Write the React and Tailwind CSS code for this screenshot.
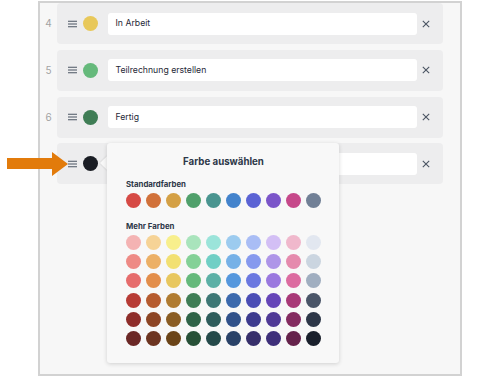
const rows = [
  { n: 4, color: "#e8c85a", label: "In Arbeit" },
  { n: 5, color: "#65b97b", label: "Teilrechnung erstellen" },
  { n: 6, color: "#3f7d55", label: "Fertig" },
  { n: 7, color: "#1a1d24", label: "", open: true },
];

const standard = ["#d64a45", "#d1713a", "#d4a045", "#50a06b", "#4a9590", "#4383cc", "#5b63d4", "#7b55c9", "#c6488a", "#718096"];

const more = [
  ["#f4b3b3", "#f6d396", "#f8ef8c", "#a9e4bc", "#9be4da", "#9ccbef", "#a9bdf5", "#d3bff5", "#f0b8cc", "#e2e7f0"],
  ["#ee8a85", "#ecb066", "#f2e072", "#84d197", "#70cfc5", "#76b1e7", "#8699ee", "#ae95e8", "#e58aad", "#cbd5e0"],
  ["#e66c6c", "#e38e4b", "#e8c75e", "#65b97b", "#5cb0a6", "#5597dd", "#6b78e0", "#9a78df", "#dc6ba0", "#a0aec0"],
  ["#b73b35", "#b65b2e", "#b07b30", "#3f7d55", "#3d7775", "#3b69ad", "#4a4db5", "#6545b8", "#a83877", "#4a5568"],
  ["#8e2d2a", "#8d4524", "#8a5c22", "#2f6347", "#2e5c5b", "#30518a", "#3c3a8e", "#4f3996", "#842b60", "#2d3748"],
  ["#6b2826", "#6d3521", "#6b4418", "#275037", "#254a4a", "#2a4268", "#372f6b", "#3e2f7a", "#65224b", "#1a202c"],
];

function Grip() {
  return (
    <svg width="9" height="8" viewBox="0 0 9 8" className="shrink-0">
      <path d="M0 1.3H9M0 4H9M0 6.7H9" stroke="#4b5563" strokeWidth="1.1" />
    </svg>
  );
}

function Close() {
  return (
    <svg width="8" height="8" viewBox="0 0 8 8" className="shrink-0">
      <path d="M0.8 0.8L7.2 7.2M7.2 0.8L0.8 7.2" stroke="#4b5563" strokeWidth="1.1" />
    </svg>
  );
}

function Swatch({ c }) {
  return <div className="w-[15px] h-[15px] rounded-full" style={{ background: c }} />;
}

function Picker() {
  return (
    <div className="absolute left-[50px] top-0 w-[232px] h-[220px] z-10">
      <div className="absolute left-[-5px] top-[15px] w-[10px] h-[10px] rotate-45 bg-[#f8f8f8] shadow-[0_0_2px_rgba(0,0,0,0.18)]" />
      <div className="relative h-full rounded-[3px] bg-[#f8f8f8] shadow-[0_1px_4px_rgba(0,0,0,0.16)] pt-[13px] pl-[19px] pr-[18px]">
        <div className="absolute left-0 top-[13px] w-[8px] h-[16px] bg-[#f8f8f8]" />
        <div className="relative text-center text-[9.7px] leading-[12px] font-bold text-[#2d3748]">Farbe auswählen</div>
        <div className="mt-[11px] text-[7.8px] leading-[11px] font-bold text-[#2d3748]">Standardfarben</div>
        <div className="mt-[3px] grid grid-cols-10 gap-x-[5px] w-[195px]">
          {standard.map((c) => (
            <Swatch key={c} c={c} />
          ))}
        </div>
        <div className="mt-[13px] text-[7.8px] leading-[11px] font-bold text-[#2d3748]">Mehr Farben</div>
        <div className="mt-[2.5px] grid grid-cols-10 gap-x-[5px] gap-y-[4.3px] w-[195px]">
          {more.flat().map((c, i) => (
            <Swatch key={i} c={c} />
          ))}
        </div>
      </div>
    </div>
  );
}

export default function App() {
  return (
    <div className="relative w-[500px] h-[379px] bg-white overflow-hidden" style={{ fontFamily: "Inter, 'Liberation Sans', sans-serif" }}>
      <div className="ml-[38px] mt-px w-[424px] h-[375px] border-2 border-[#d2d2d2] bg-[#f7f7f7]">
        <div className="flex flex-col gap-[5.8px]">
          {rows.map((r) => (
            <div key={r.n} className="flex items-center">
              <span className="w-[17px] text-center text-[10px] text-[#a3a3a3]">{r.n}</span>
              <div className="relative flex items-center w-[386px] h-[41px] rounded-[4px] bg-[#ededee] pl-[11px] pr-[13px]">
                <Grip />
                <div className="ml-[6px] w-[15px] h-[15px] rounded-full shrink-0" style={{ background: r.color }} />
                <div className="ml-[9.5px] flex items-center w-[309px] h-[22px] rounded-[3px] bg-white pl-[8px] text-[8.7px] text-[#1f2937]">
                  {r.label}
                </div>
                <div className="ml-auto">
                  <Close />
                </div>
                {r.open && <Picker />}
              </div>
            </div>
          ))}
        </div>
      </div>
      <svg className="absolute left-0 top-0" width="80" height="190" viewBox="0 0 80 190">
        <polygon points="7,158 52,158 52,152 68,164 52,176 52,169 7,169" fill="#e27b0b" />
      </svg>
    </div>
  );
}
